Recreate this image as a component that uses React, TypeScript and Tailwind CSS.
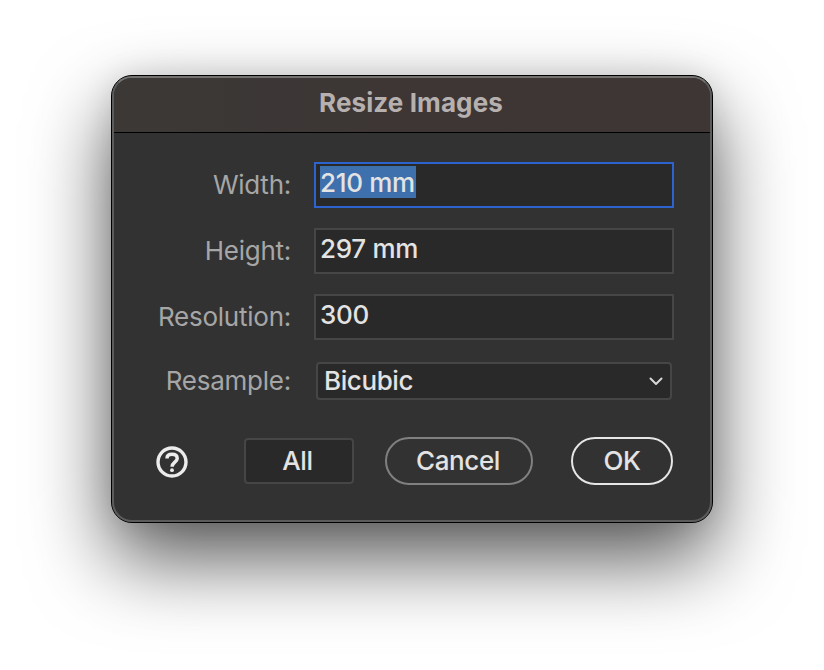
import type { ReactNode } from "react";

function Label({ children, className = "" }: { children: ReactNode; className?: string }) {
  return (
    <span className={`w-[177px] shrink-0 text-right text-[26px] leading-[46px] font-[430] tracking-[-0.25px] whitespace-nowrap text-[#a6a6a6] ${className}`}>
      {children}
    </span>
  );
}

function Field({ value, selected = false }: { value: string; selected?: boolean }) {
  return (
    <div
      className={`flex h-[46px] w-[360px] items-start border-2 pt-0.5 pl-1 text-[26px] leading-[34px] font-[450] tracking-[-0.3px] text-[#e3e3e3] ${
        selected ? "border-[#2c63cf] bg-[#292929]" : "border-[#464646] bg-[#292929]"
      }`}
    >
      <span className={`h-8 whitespace-nowrap ${selected ? "w-24 bg-[#3e70ad]" : ""}`}>{value}</span>
    </div>
  );
}

export default function App() {
  return (
    <main className="flex h-[670px] w-[824px] items-start justify-center overflow-hidden bg-white pt-[75px] font-['Inter','Liberation_Sans',sans-serif]">
      <section className="h-[448px] w-[602px] rounded-[21px] border border-black bg-[#323232] shadow-[0_36px_80px_rgba(0,0,0,0.66),0_0_30px_rgba(0,0,0,0.1)]">
        <div className="h-full overflow-hidden rounded-[20px] border-2 border-[#5c5c5c] border-t-[#747270]">
          <header className="flex h-[55px] justify-center border-b border-black bg-linear-to-r from-[#3b3836] from-10% to-[#3d3635] to-45%">
            <h1 className="-ml-0.5 text-[26px] leading-[50px] font-bold tracking-[0.1px] whitespace-nowrap text-[#b6b0af]">Resize Images</h1>
          </header>
          <div className="flex flex-col pt-[29px]">
            <div className="flex h-[66px] gap-[23px]">
              <Label>Width:</Label>
              <Field value="210 mm" selected />
            </div>
            <div className="flex h-[66px] gap-[23px]">
              <Label>Height:</Label>
              <Field value="297 mm" />
            </div>
            <div className="flex h-[66px] gap-[23px]">
              <Label>Resolution:</Label>
              <Field value="300" />
            </div>
            <div className="flex h-[46px] gap-[23px]">
              <Label className="-mt-0.5">Resample:</Label>
              <button className="mt-0.5 ml-0.5 flex h-[38px] w-[356px] items-center justify-between rounded border-2 border-[#464646] bg-[#292929] pr-[7px] pl-1.5 text-[26px] leading-8 font-[450] tracking-[-0.4px] text-[#e3e3e3]">
                <span>Bicubic</span>
                <svg width="14" height="10" viewBox="0 0 14 10" fill="none" stroke="#d8d8d8" strokeWidth="2" strokeLinecap="round" strokeLinejoin="round">
                  <path d="M1.5 2.5 7 8 12.5 2.5" />
                </svg>
              </button>
            </div>
          </div>
          <footer className="mt-[31px] flex h-12 items-center pl-[42px] text-[26px] font-[450] tracking-[-0.4px] text-[#e3e3e3]">
            <svg className="mt-0.5 mr-14" width="32" height="32" viewBox="0 0 32 32" fill="none" stroke="#ececec">
              <circle cx="16" cy="16" r="14" strokeWidth="3.4" />
              <path d="M11 12.4C11 9.6 13 8.3 16 8.3c3.2 0 5.2 1.5 5.2 4.1 0 3.8-5.1 3.7-5.1 8.3" strokeWidth="3.5" />
              <circle cx="16" cy="24.2" r="1.9" fill="#ececec" stroke="none" />
            </svg>
            <button className="h-[46px] w-[110px] rounded border-2 border-[#464646] bg-[#292929] pr-[3px] pb-0.5">All</button>
            <button className="ml-[31px] h-12 w-[148px] rounded-full border-2 border-[#808080] pr-0.5 pb-0.5">Cancel</button>
            <button className="ml-[38px] h-12 w-[102px] rounded-full border-2 border-[#e6e6e6] pb-0.5">OK</button>
          </footer>
        </div>
      </section>
    </main>
  );
}
